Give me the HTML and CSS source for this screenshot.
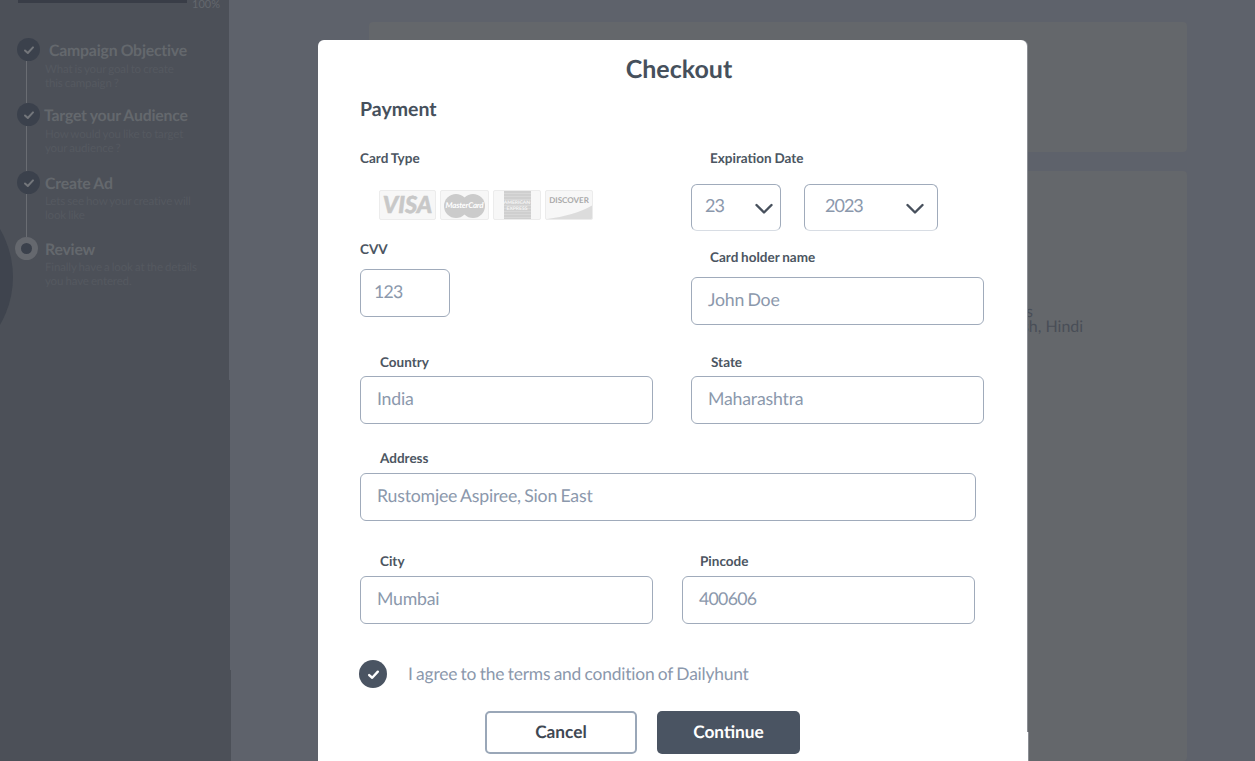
FILE: index.html
```html
<!DOCTYPE html>
<html lang="en">
<head>
<meta charset="utf-8">
<title>Checkout</title>
<link rel="stylesheet" href="styles.css">
</head>
<body>
<div class="page">
  <aside class="sidebar">
    <div class="progress">
      <div class="progress-bar"></div>
      <div class="progress-label">100%</div>
    </div>
    <div class="step step-a">
      <div class="rail">
        <div class="dot"><svg viewBox="0 0 12 12" width="12" height="12"><path d="M2 6.5 L4.8 9 L10 3.4" class="tick"/></svg></div>
        <div class="line"></div>
      </div>
      <div class="step-text">
        <div class="step-title shift-right">Campaign Objective</div>
        <div class="step-sub">What is your goal to create<br>this campaign ?</div>
      </div>
    </div>
    <div class="step step-b">
      <div class="rail">
        <div class="dot"><svg viewBox="0 0 12 12" width="12" height="12"><path d="M2 6.5 L4.8 9 L10 3.4" class="tick"/></svg></div>
        <div class="line"></div>
      </div>
      <div class="step-text">
        <div class="step-title shift-left">Target your Audience</div>
        <div class="step-sub">How would you like to target<br>your audience ?</div>
      </div>
    </div>
    <div class="step step-c">
      <div class="rail">
        <div class="dot"><svg viewBox="0 0 12 12" width="12" height="12"><path d="M2 6.5 L4.8 9 L10 3.4" class="tick"/></svg></div>
        <div class="line"></div>
      </div>
      <div class="step-text">
        <div class="step-title">Create Ad</div>
        <div class="step-sub">Lets see how your creative will<br>look like</div>
      </div>
    </div>
    <div class="step step-d">
      <div class="rail">
        <div class="ring"><div class="ring-core"></div></div>
      </div>
      <div class="step-text">
        <div class="step-title">Review</div>
        <div class="step-sub">Finally have a look at the details<br>you have entered.</div>
      </div>
    </div>
    <div class="blob"></div>
  </aside>

  <main class="main">
    <section class="card card-top"></section>
    <section class="card card-bottom">
      <div class="lang-head">Languages</div>
      <div class="lang-list">English, Hindi</div>
    </section>
  </main>

  <div class="modal">
    <h1 class="modal-title">Checkout</h1>
    <h2 class="modal-sub">Payment</h2>

    <div class="row row-first">
      <div class="col">
        <div class="label label-card">Card Type</div>
        <div class="cards">
          <div class="pay pay-visa"><span>VISA</span></div>
          <div class="pay pay-mc"><i class="mc-l"></i><i class="mc-r"></i><span>MasterCard</span></div>
          <div class="pay pay-amex"><span>AMERICAN<br>EXPRESS</span></div>
          <div class="pay pay-disc">
            <span>DISCOVER</span>
            <svg class="disc-wedge" viewBox="0 0 46 14" width="46" height="14"><path d="M0 14 C18 12 34 7 46 0 V14 Z"/></svg>
          </div>
        </div>
        <div class="label label-cvv">CVV</div>
        <div class="input input-cvv digits">123</div>
      </div>
      <div class="col">
        <div class="label label-indent">Expiration Date</div>
        <div class="selects">
          <div class="select select-day"><span>23</span><svg viewBox="0 0 18 12" width="18" height="12"><path d="M1.5 2 L9 9.5 L16.5 2" class="chev"/></svg></div>
          <div class="select select-year"><span>2023</span><svg viewBox="0 0 18 12" width="18" height="12"><path d="M1.5 2 L9 9.5 L16.5 2" class="chev"/></svg></div>
        </div>
        <div class="label label-indent label-holder">Card holder name</div>
        <div class="input input-half">John Doe</div>
      </div>
    </div>

    <div class="row row-country">
      <div class="col">
        <div class="label label-indent label-tight">Country</div>
        <div class="input input-half">India</div>
      </div>
      <div class="col">
        <div class="label label-indent2 label-tight">State</div>
        <div class="input input-half">Maharashtra</div>
      </div>
    </div>

    <div class="row-address">
      <div class="label label-indent label-tight2">Address</div>
      <div class="input input-full">Rustomjee Aspiree, Sion East</div>
    </div>

    <div class="row row-city">
      <div class="col col-narrow">
        <div class="label label-indent label-tight2">City</div>
        <div class="input input-half">Mumbai</div>
      </div>
      <div class="col">
        <div class="label label-indent3 label-tight2">Pincode</div>
        <div class="input input-half digits">400606</div>
      </div>
    </div>

    <div class="agree">
      <div class="agree-check"><svg viewBox="0 0 12 12" width="13" height="13"><path d="M2 6.5 L4.8 9 L10 3.4" class="tick tick-white"/></svg></div>
      <div class="agree-text">I agree to the terms and condition of Dailyhunt</div>
    </div>

    <div class="actions">
      <div class="btn btn-cancel">Cancel</div>
      <div class="btn btn-continue">Continue</div>
    </div>
    <div class="modal-seam"></div>
  </div>
</div>
</body>
</html>
```
FILE: styles.css
```css
* { box-sizing: border-box; }
html, body { margin: 0; height: 100%; overflow: hidden; }
body { font-family: Lato, "Noto Sans", sans-serif; background: #5e626b; text-rendering: geometricPrecision; }

.page { position: relative; display: flex; width: 1255px; height: 761px; overflow: hidden; background: #5e626b; }

/* sidebar: its right edge steps out by a pixel at two heights */
.sidebar {
  position: relative; flex: none; width: 231px; overflow: hidden;
  background:
    linear-gradient(#5e626b, #5e626b) right top / 2px 380px no-repeat,
    linear-gradient(#5e626b, #5e626b) right 380px / 1px 290px no-repeat,
    #4c5058;
}
.progress { display: flex; height: 38px; padding-left: 18px; }
.progress-bar { width: 169px; height: 3px; background: #393d47; }
.progress-label { margin-left: 5px; font-size: 11px; line-height: 9px; color: #63676d; height: 9px; }

.step { display: flex; padding-left: 15px; }
.step-a { height: 65px; }
.step-b { height: 68px; }
.step-c { height: 66px; }
.rail { flex: none; width: 30px; display: flex; flex-direction: column; align-items: flex-start; }
.dot { flex: none; display: flex; align-items: center; justify-content: center; width: 23px; height: 23px; margin-left: 2px; border-radius: 50%; background: #3b414c; }
.line { flex: 1; width: 1px; margin-left: 11px; background: #6a6d73; }
.tick { fill: none; stroke: #73767b; stroke-width: 2; stroke-linecap: round; stroke-linejoin: round; }
.tick-white { stroke: #fff; stroke-width: 2.2; }
.ring { display: flex; align-items: center; justify-content: center; width: 23px; height: 23px; border-radius: 50%; background: #65686e; }
.ring-core { width: 11px; height: 11px; border-radius: 50%; background: #3b414c; }

.step-text { flex: 1; min-width: 0; }
.step-title { font-size: 15.8px; letter-spacing: -0.2px; word-spacing: -0.3px; line-height: 25px; font-weight: 700; color: #64686d; white-space: nowrap; }
.shift-right { margin-left: 4px; }
.shift-left { margin-left: -1px; }
.step-sub { font-size: 11.5px; letter-spacing: -0.15px; word-spacing: -0.6px; line-height: 14px; color: #555960; white-space: nowrap; }
.step-c .step-title, .step-d .step-title { line-height: 26px; }
.step-c .step-sub, .step-d .step-sub { margin-top: -2px; }
.blob { position: absolute; left: -177px; top: 182px; width: 190px; height: 190px; border-radius: 50%; background: #3f444e; }

/* main */
.main { flex: 1; display: flex; flex-direction: column; min-width: 0; padding: 22px 68px 0 138px; }
.card { background: #64676b; border-radius: 4px; }
.card-top { flex: none; height: 130px; }
.card-bottom { flex: 1; margin-top: 19px; padding: 134px 0 0 590px; color: #494e57; font-size: 16px; line-height: 18px; }
.lang-head { height: 13px; line-height: 14px; white-space: nowrap; }
.lang-list { margin-left: 29px; white-space: nowrap; }

/* modal */
.modal { position: absolute; left: 318px; top: 40px; width: 709px; height: 721px; padding-left: 42px; background: #fff; border-radius: 6px 6px 0 0; box-shadow: 1px 0 0 #8b8e94; }
.modal-seam { position: absolute; left: 709px; top: 692px; width: 1px; height: 29px; background: #fff; box-shadow: 1px 0 0 #8b8e94; }
.modal-title { margin: 12px 0 0; width: 638px; text-align: center; font-size: 25px; line-height: 34px; font-weight: 700; color: #46505c; }
.modal-sub { margin: 11px 0 0; font-size: 19.5px; line-height: 26px; font-weight: 700; color: #46505c; }

.row { display: flex; }
.col { flex: none; width: 331px; }
.col-narrow { width: 322px; }
.row-first { margin-top: 26px; }
.row-country { margin-top: 28px; }
.row-address { margin-top: 25px; }
.row-city { margin-top: 31px; }

.label { font-size: 13.5px; word-spacing: -0.5px; line-height: 18px; font-weight: 700; color: #4b5561; white-space: nowrap; }
.label-indent { margin-left: 19px; }
.label-indent2 { margin-left: 20px; }
.label-indent3 { margin-left: 18px; }
.col-narrow .label-indent, .row-country .label-indent, .row-address .label-indent { margin-left: 20px; }
.label-holder { margin-top: 17px; margin-bottom: 11px; }
.label-tight { margin-bottom: 5px; }
.label-tight2 { margin-bottom: 6px; }
.label-cvv { margin-top: 20px; margin-bottom: 11px; }

.input { display: flex; align-items: center; height: 48px; padding: 0 0 4px 16px; border: 1px solid #a0abbb; border-radius: 6px; font-size: 17.7px; letter-spacing: -0.2px; word-spacing: -1px; color: #8b98ac; white-space: nowrap; }
.input.digits { letter-spacing: -0.7px; }
.input-cvv { width: 90px; padding-left: 13px; }
.input-half { width: 293px; }
.input-full { width: 616px; }

.selects { display: flex; margin-top: 17px; }
.select { display: flex; align-items: center; justify-content: space-between; height: 47px; border: 1px solid #a0abbb; border-bottom-color: #d8dde4; border-radius: 6px; font-size: 18px; letter-spacing: -1px; color: #8b98ac; }
.select span { margin-top: -6px; }
.select svg { margin-top: 2px; }
.select-day { width: 90px; padding: 0 7px 0 13px; }
.select-year { width: 134px; margin-left: 23px; padding: 0 13px 0 20px; }
.chev { fill: none; stroke: #47505c; stroke-width: 2.4; stroke-linecap: round; stroke-linejoin: round; }

/* card logos */
.cards { display: flex; margin: 23px 0 0 19px; height: 30px; }
.pay { position: relative; flex: none; display: flex; align-items: center; justify-content: center; height: 30px; background: #f7f7f7; border: 1px solid #ececec; border-radius: 2px; overflow: hidden; }
.pay-visa { width: 57px; font-size: 23.5px; font-weight: 900; font-style: italic; color: #c8c8c8; -webkit-text-stroke: 0.5px #c8c8c8; }
.pay-mc { width: 49px; margin-left: 4px; }
.mc-l, .mc-r { position: absolute; top: 3px; width: 24px; height: 24px; border-radius: 50%; background: #cbcbcb; }
.mc-l { left: 3px; }
.mc-r { right: 3px; }
.pay-mc span { position: relative; font-size: 8px; font-weight: 700; font-style: italic; color: #fff; letter-spacing: -0.2px; }
.pay-amex { width: 48px; margin-left: 4px; }
.pay-amex span {
  display: block; width: 27px; height: 28px; padding-top: 9px; overflow: hidden;
  background: repeating-linear-gradient(#cfcfcf 0 2px, #d8d8d8 2px 3px);
  text-align: center; font-size: 5px; line-height: 6px; font-weight: 700; color: #f4f4f4;
}
.pay-disc { width: 48px; margin-left: 4px; align-items: flex-start; }
.pay-disc span { margin-top: 3px; font-size: 8px; line-height: 12px; font-weight: 700; color: #a9a9a9; }
.disc-wedge { position: absolute; left: 1px; bottom: 0; }
.disc-wedge path { fill: #dcdcdc; }

/* footer */
.agree { display: flex; align-items: center; margin: 36px 0 0 -1px; height: 28px; }
.agree-check { flex: none; display: flex; align-items: center; justify-content: center; width: 28px; height: 28px; border-radius: 50%; background: #4a5462; }
.agree-text { margin-left: 21px; padding-bottom: 1px; font-size: 17.4px; letter-spacing: -0.2px; word-spacing: -0.8px; color: #8b98ac; white-space: nowrap; }

.actions { display: flex; margin: 23px 0 0 125px; }
.btn { display: flex; align-items: center; justify-content: center; height: 43px; padding-bottom: 2px; border-radius: 5px; font-size: 17.3px; font-weight: 700; }
.btn-cancel { width: 152px; border: 2px solid #9aa7b8; color: #3f4853; background: #fff; }
.btn-continue { width: 143px; margin-left: 20px; background: #4a5462; color: #fff; }
```
